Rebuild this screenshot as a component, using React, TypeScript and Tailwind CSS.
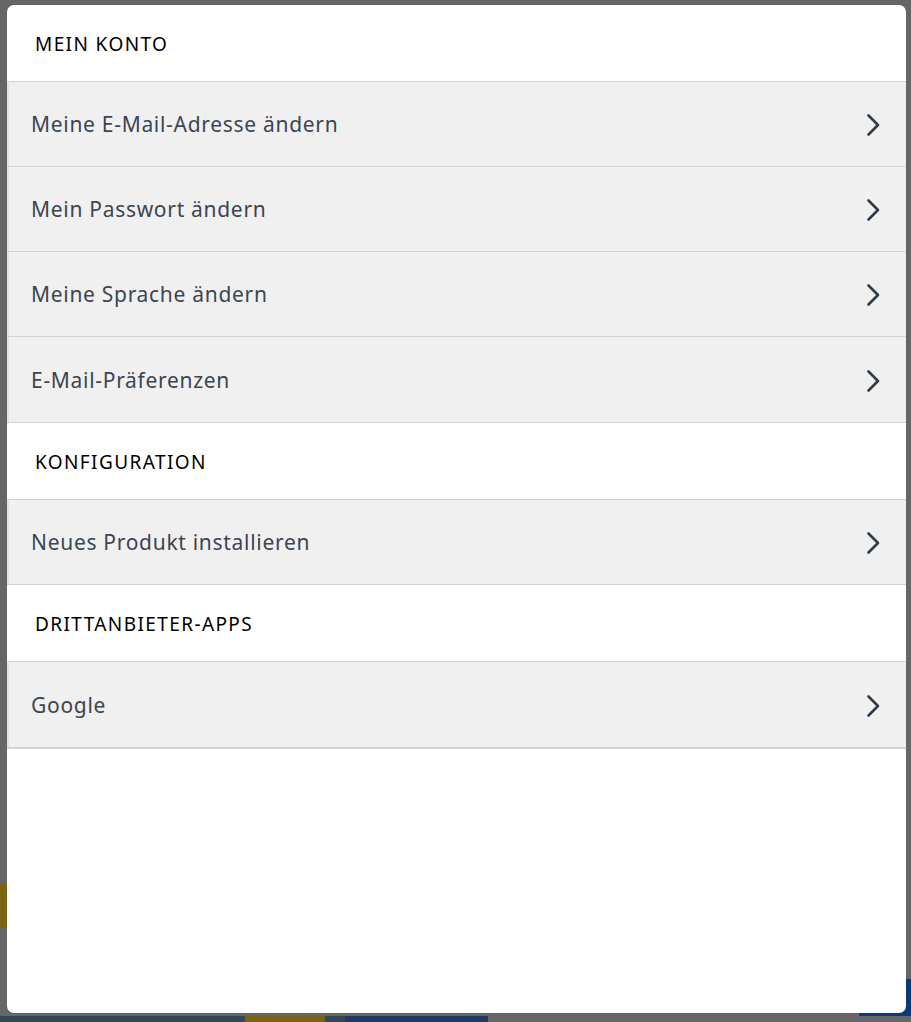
import React from "react";

const Chevron = () => (
  <svg width="16" height="24" viewBox="0 0 16 24" fill="none" className="shrink-0">
    <path d="M3.5 2.5 L13 12 L3.5 21.5" stroke="#2f3b46" strokeWidth="2.6" strokeLinecap="round" strokeLinejoin="round" />
  </svg>
);

const Header = ({ children }: { children: React.ReactNode }) => (
  <div className="h-[76px] flex items-center pl-[28px] pt-[2px] text-[19px] text-black tracking-[1.4px]">
    {children}
  </div>
);

const Row = ({ children, last, tall }: { children: React.ReactNode; last?: boolean; tall?: boolean }) => (
  <div
    className={
      "flex items-center justify-between bg-[#f0f0f0] border-t border-t-[#d3d3d3] border-l-2 border-l-[#e2e2e2] pl-[22px] pr-[25px] pt-[2px] text-[21px] tracking-[0.7px] text-[#3c4550] " +
      (tall ? "h-[86px] " : "h-[85px] ") +
      (last ? "h-[88px] border-b-2 border-b-[#d3d3d3]" : "")
    }
  >
    <span>{children}</span>
    <Chevron />
  </div>
);

export default function App() {
  return (
    <div
      className="relative w-[911px] h-[1022px] bg-[#666666] overflow-hidden flex flex-col pt-[5px]"
      style={{ fontFamily: '"Noto Sans", "Open Sans", sans-serif' }}
    >
      {/* background content peeking out behind the dialog */}
      <div className="absolute left-0 top-[884px] w-[7px] h-[44px] bg-[#7a6410]" />
      <div className="absolute right-0 top-[979px] w-[52px] h-[43px] bg-[#0a3a78]" />

      <div className="relative ml-[7px] w-[899px] h-[1008px] bg-white rounded-[7px] overflow-hidden flex flex-col">
        <Header>MEIN KONTO</Header>
        <Row>Meine E-Mail-Adresse ändern</Row>
        <Row>Mein Passwort ändern</Row>
        <Row>Meine Sprache ändern</Row>
        <Row tall>E-Mail-Präferenzen</Row>
        <div className="border-t border-t-[#d3d3d3]">
          <Header>KONFIGURATION</Header>
        </div>
        <Row>Neues Produkt installieren</Row>
        <div className="border-t border-t-[#d3d3d3]">
          <Header>DRITTANBIETER-APPS</Header>
        </div>
        <Row last>Google</Row>
      </div>

      <div className="relative mt-[3px] flex h-[6px]">
        <div className="w-[245px] bg-[#2f4a55]" />
        <div className="w-[80px] bg-[#7a6410]" />
        <div className="w-[20px] bg-[#2f4a55]" />
        <div className="w-[143px] bg-[#1f3a66]" />
        <div className="flex-1 bg-[#666666]" />
      </div>
    </div>
  );
}
